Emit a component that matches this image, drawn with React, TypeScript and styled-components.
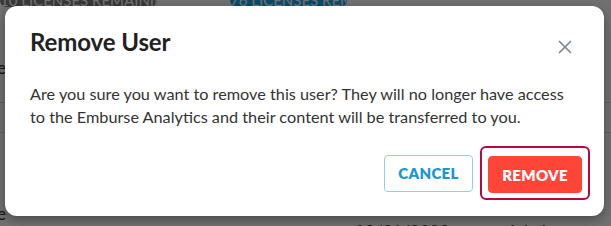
import React from "react"
import styled, { createGlobalStyle } from "styled-components"

const GlobalStyle = createGlobalStyle`
  html, body {
    margin: 0;
    padding: 0;
    width: 611px;
    height: 226px;
    overflow: hidden;
    font-family: "Lato", "Noto Sans", sans-serif;
  }
`

const Page = styled.div`
  position: relative;
  width: 611px;
  height: 226px;
  background: #fafafa;
  overflow: hidden;
`

const TopBar = styled.div`
  display: flex;
  height: 7px;
  overflow: hidden;
`

const Pill = styled.div<{ $tone: "dark" | "blue"; $width: number; $offset: number }>`
  height: 7px;
  width: ${(p) => p.$width}px;
  margin-left: ${(p) => p.$offset}px;
  border-radius: 0 0 10px 10px;
  background: ${(p) => (p.$tone === "dark" ? "#7e7e7e" : "#18a8ef")};
  color: #fff;
  font-size: 15px;
  line-height: 0;
  text-align: center;
  white-space: nowrap;
  overflow: hidden;
`

const Table = styled.div`
  display: flex;
  flex-direction: column;
`

const Row = styled.div<{ $height: number; $pad: number }>`
  display: grid;
  grid-template-columns: 6px 349px 152px 1fr;
  height: ${(p) => p.$height}px;
  box-sizing: border-box;
  padding-bottom: ${(p) => p.$pad}px;
  border-bottom: 1px solid #d8d8d8;
  font-size: 17px;
  color: #333;
  align-items: end;
`

const NameCell = styled.div`
  display: flex;
  flex-direction: column;
  align-items: flex-end;
  white-space: nowrap;
`

const Email = styled.span`
  font-size: 15px;
  color: #666;
`

const Cell = styled.div`
  white-space: nowrap;
`

const Overlay = styled.div`
  position: absolute;
  inset: 0;
  background: rgba(0, 0, 0, 0.55);
`

const Dialog = styled.div`
  position: absolute;
  left: 5px;
  top: 6px;
  width: 599px;
  height: 210px;
  box-sizing: border-box;
  background: #fff;
  border-radius: 12px;
  box-shadow: 0 4px 12px rgba(0, 0, 0, 0.35);
  padding: 19px 25px 0 25px;
  display: flex;
  flex-direction: column;
`

const Header = styled.div`
  display: flex;
  align-items: center;
  justify-content: space-between;
  height: 32px;
`

const Title = styled.h2`
  margin: 0;
  font-size: 24px;
  font-weight: 700;
  color: #222;
  letter-spacing: -0.1px;
`

const CloseButton = styled.button`
  border: none;
  background: none;
  padding: 0;
  margin-right: 6px;
  margin-top: 12px;
  width: 16px;
  height: 16px;
  display: flex;
  align-items: center;
  justify-content: center;
  cursor: pointer;
`

const Body = styled.p`
  margin: 25px 0 0 0;
  max-width: 548px;
  font-size: 16.25px;
  line-height: 23px;
  color: #333;
`

const Actions = styled.div`
  display: flex;
  justify-content: flex-end;
  align-items: center;
  gap: 7px;
  margin-top: 18px;
  margin-right: -11px;
`

const Button = styled.button<{ $variant: "outline" | "danger" }>`
  height: 37px;
  box-sizing: border-box;
  border-radius: 4px;
  font-family: "Lato", sans-serif;
  font-weight: 800;
  font-size: 15px;
  letter-spacing: 0.3px;
  text-transform: uppercase;
  cursor: pointer;
  padding: 0 10px;
  border: 1px solid ${(p) => (p.$variant === "outline" ? "#8fd0ec" : "#ff4538")};
  background: ${(p) => (p.$variant === "outline" ? "#fff" : "#ff4538")};
  color: ${(p) => (p.$variant === "outline" ? "#1b97d3" : "#fff")};
  width: ${(p) => (p.$variant === "outline" ? "89px" : "94px")};
`

const FocusRing = styled.div`
  padding: 8px 6px 5px 6px;
  border: 2px solid #b3093e;
  border-radius: 6px;
  display: flex;
`

const CloseIcon = () => (
  <svg width="14" height="14" viewBox="0 0 14 14">
    <path d="M1.5 1.5 L12.5 12.5 M12.5 1.5 L1.5 12.5" stroke="#7b8794" strokeWidth="1.7" strokeLinecap="round" />
  </svg>
)

export default function App() {
  return (
    <>
      <GlobalStyle />
      <Page>
        <TopBar>
          <Pill $tone="dark" $width={157} $offset={0}>10 LICENSES REMAINING</Pill>
          <Pill $tone="blue" $width={117} $offset={73}>76 LICENSES REMAINING</Pill>
        </TopBar>
        <Table>
          <Row $height={96} $pad={24}>
            <NameCell>Name</NameCell>
            <Cell />
            <Cell />
            <Cell />
          </Row>
          <Row $height={30} $pad={0}>
            <NameCell />
          </Row>
          <Row $height={110} $pad={0}>
            <NameCell>
              <span>Steve</span>
              <Email>steve@email.com</Email>
            </NameCell>
            <Cell />
            <Cell>03/31/2023</Cell>
            <Cell>Admin</Cell>
          </Row>
        </Table>
        <Overlay />
        <Dialog role="dialog">
          <Header>
            <Title>Remove User</Title>
            <CloseButton aria-label="Close">
              <CloseIcon />
            </CloseButton>
          </Header>
          <Body>
            Are you sure you want to remove this user? They will no longer have access
            to the Emburse Analytics and their content will be transferred to you.
          </Body>
          <Actions>
            <Button $variant="outline">Cancel</Button>
            <FocusRing>
              <Button $variant="danger">Remove</Button>
            </FocusRing>
          </Actions>
        </Dialog>
      </Page>
    </>
  )
}
